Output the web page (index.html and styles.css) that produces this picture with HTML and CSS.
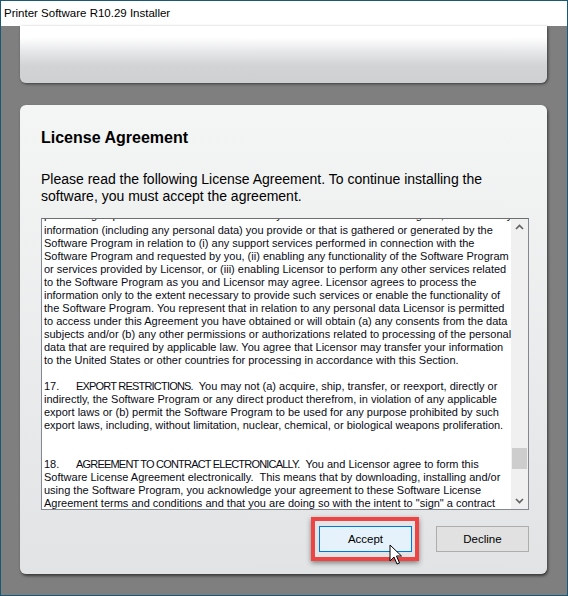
FILE: index.html
```html
<!DOCTYPE html>
<html lang="en">
<head>
  <meta charset="UTF-8">
  <meta name="viewport" content="width=device-width, initial-scale=1.0">
  <title>Printer Software R10.29 Installer</title>
  <link rel="stylesheet" href="styles.css">
</head>
<body>
  <div class="window">
    <div class="titlebar">Printer Software R10.29 Installer</div>
    <div class="banner"></div>
    <div class="panel">
      <h2>License Agreement</h2>
      <p class="intro">Please read the following License Agreement. To continue installing the<br>software, you must accept the agreement.</p>
      <div class="license-box">
        <div class="license-text">
          <div class="line cut">processing of personal data. In connection with your use of the Software Program, Licensor may</div>
          <div class="line">information (including any personal data) you provide or that is gathered or generated by the</div>
          <div class="line">Software Program in relation to (i) any support services performed in connection with the</div>
          <div class="line">Software Program and requested by you, (ii) enabling any functionality of the Software Program</div>
          <div class="line">or services provided by Licensor, or (iii) enabling Licensor to perform any other services related</div>
          <div class="line">to the Software Program as you and Licensor may agree. Licensor agrees to process the</div>
          <div class="line">information only to the extent necessary to provide such services or enable the functionality of</div>
          <div class="line">the Software Program. You represent that in relation to any personal data Licensor is permitted</div>
          <div class="line">to access under this Agreement you have obtained or will obtain (a) any consents from the data</div>
          <div class="line">subjects and/or (b) any other permissions or authorizations related to processing of the personal</div>
          <div class="line">data that are required by applicable law. You agree that Licensor may transfer your information</div>
          <div class="line">to the United States or other countries for processing in accordance with this Section.</div>
          <div class="line">&nbsp;</div>
          <div class="line"><span class="num">17.</span><span class="caps">EXPORT RESTRICTIONS.</span>&nbsp; You may not (a) acquire, ship, transfer, or reexport, directly or</div>
          <div class="line">indirectly, the Software Program or any direct product therefrom, in violation of any applicable</div>
          <div class="line">export laws or (b) permit the Software Program to be used for any purpose prohibited by such</div>
          <div class="line">export laws, including, without limitation, nuclear, chemical, or biological weapons proliferation.</div>
          <div class="line">&nbsp;</div>
          <div class="line">&nbsp;</div>
          <div class="line"><span class="num">18.</span><span class="caps">AGREEMENT TO CONTRACT ELECTRONICALLY.</span>&nbsp; You and Licensor agree to form this</div>
          <div class="line">Software License Agreement electronically.&nbsp; This means that by downloading, installing and/or</div>
          <div class="line">using the Software Program, you acknowledge your agreement to these Software License</div>
          <div class="line">Agreement terms and conditions and that you are doing so with the intent to "sign" a contract</div>
        </div>
        <div class="scrollbar">
          <svg class="arrow" width="17" height="17" viewBox="0 0 17 17"><path d="M5 10 L8.5 6.5 L12 10" fill="none" stroke="#606060" stroke-width="1.6"/></svg>
          <div class="track"><div class="thumb"></div></div>
          <svg class="arrow" width="17" height="17" viewBox="0 0 17 17"><path d="M5 7 L8.5 10.5 L12 7" fill="none" stroke="#606060" stroke-width="1.6"/></svg>
        </div>
      </div>
      <div class="actions">
        <div class="highlight-wrap">
          <button class="btn btn-default">Accept</button>
          <div class="highlight"></div>
          <svg class="cursor" width="14" height="22" viewBox="0 0 14 22"><path d="M1 1 L1 17 L5 13 L8 20 L10.5 19 L7.5 12 L12.5 12 Z" fill="#fff" stroke="#000" stroke-width="1" stroke-linejoin="round"/></svg>
        </div>
        <button class="btn">Decline</button>
      </div>
    </div>
  </div>
</body>
</html>
```

FILE: styles.css
```css
body { margin: 0; background: #808080; }
.window { width: 568px; height: 596px; box-sizing: border-box; border: 1px solid #1b5876; background: #7f7f7f; display: flex; flex-direction: column; overflow: hidden; }
.titlebar { height: 25px; background: #fff; font-family: "Liberation Sans", Arial, sans-serif; font-size: 11.5px; line-height: 25px; padding-left: 3px; color: #000; }
.banner { height: 57px; margin: 0 20px 0 19px; background: linear-gradient(#fff 0%, #fff 20%, #e6e7e8 45%, #d2d3d5 70%, #cfd0d2 100%); border-radius: 0 0 6px 6px; box-shadow: 1px 1px 3px rgba(0,0,0,0.55); }
.panel { margin: 22px 20px 0 19px; padding: 23px 18px 22px 21px; background: linear-gradient(#f4f5f5, #e2e3e4); border-radius: 6px; box-shadow: 1px 2px 3px rgba(0,0,0,0.55); font-family: "Liberation Sans", Arial, sans-serif; color: #000; }
h2 { margin: 0; font-size: 16px; line-height: 19px; font-weight: bold; }
.intro { margin: 24px 0 0; font-size: 14px; line-height: 16.5px; }
.license-box { margin-top: 14px; height: 292px; box-sizing: border-box; border: 1px solid #828790; border-top-color: #6e6e6e; background: #fff; display: flex; overflow: hidden; }
.license-text { flex: 1; overflow: hidden; padding-left: 2px; font-family: "Liberation Sans", Tahoma, sans-serif; font-size: 11px; color: #0a0a14; }
.line { height: 13px; line-height: 13px; white-space: pre; }
.line.cut { margin-top: -8px; line-height: 9px; }
.num { display: inline-block; width: 32px; }
.caps { letter-spacing: -0.8px; }
.scrollbar { width: 17px; background: #f0f0f0; display: flex; flex-direction: column; }
.arrow { display: block; flex: none; }
.track { flex: 1; padding-top: 212px; }
.thumb { height: 21px; margin: 0 1px; background: #cdcdcd; }
.actions { margin-top: 16px; display: flex; justify-content: flex-end; gap: 24px; }
.btn { width: 93px; height: 26px; font-family: "Liberation Sans", Arial, sans-serif; font-size: 11.5px; color: #000; background: #e1e1e1; border: 1px solid #adadad; padding: 0; }
.btn-default { background: #e5f1fb; border-color: #0078d7; display: block; }
.highlight-wrap { position: relative; }
.highlight { position: absolute; top: -9px; left: -8px; right: -7px; bottom: -9px; border: 4px solid #ee4444; box-shadow: 0 2px 5px rgba(0,0,0,0.45); }
.cursor { position: absolute; left: 70px; top: 18px; }
```
